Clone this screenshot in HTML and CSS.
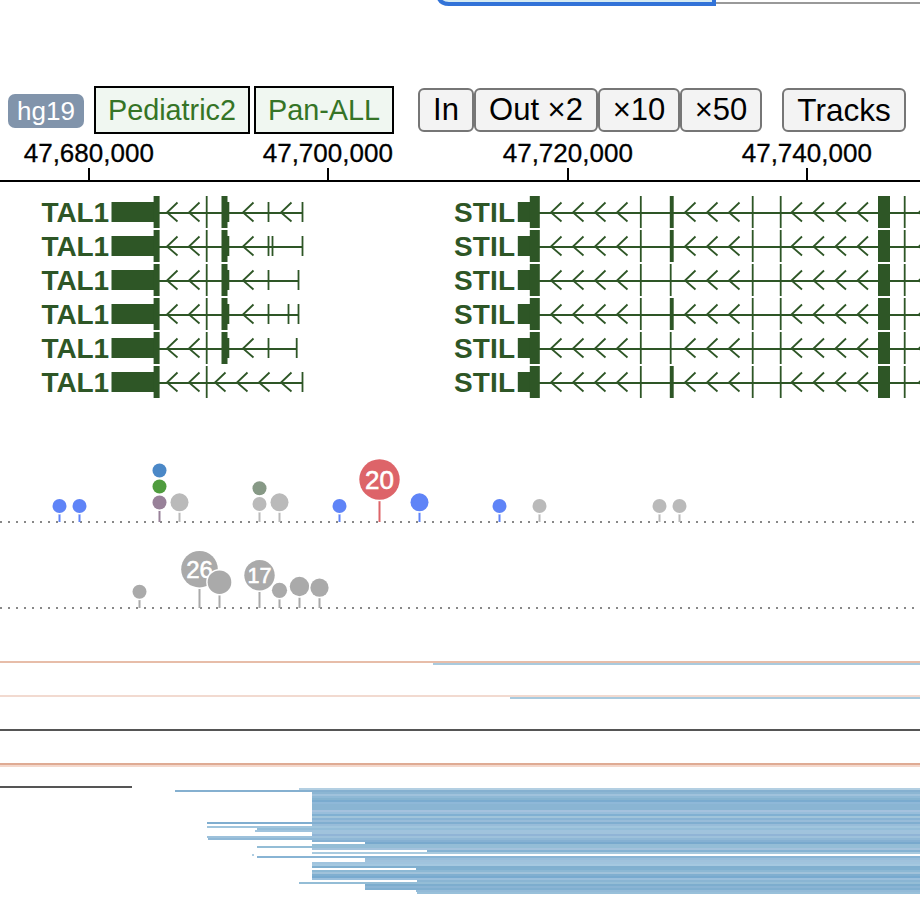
FILE: index.html
```
<!DOCTYPE html>
<html lang="en">
<head>
<meta charset="utf-8">
<title>Genome browser</title>
<link rel="stylesheet" href="styles.css">
</head>
<body>
<main class="browser">
  <svg class="ideogram" viewBox="0 0 920 86">
    <path d="M715 3H920" stroke="#999" stroke-width="2"/>
    <path d="M438 -4Q440 4 449 4H714V-6" fill="#d5eaf2" stroke="#3273d8" stroke-width="4"/>
    <path d="M714 -4V6" stroke="#3273d8" stroke-width="4"/>
  </svg>
  <header class="toolbar">
    <span class="genome">hg19</span>
    <span class="dataset pediatric">Pediatric2</span>
    <span class="dataset pan">Pan-ALL</span>
    <div class="zoom-buttons">
      <button class="in">In</button>
      <button class="out">Out ×2</button>
      <button class="by">×10</button>
      <button class="by">×50</button>
    </div>
    <button class="tracks">Tracks</button>
  </header>
  <svg class="ruler" viewBox="0 134 920 52"></svg>
  <svg class="genes" viewBox="0 186 920 254"></svg>
  <svg class="mutations" viewBox="0 440 920 200"></svg>
  <svg class="segments" viewBox="0 640 920 280"></svg>
</main>
<script src="tracks.js"></script>
</body>
</html>
```
FILE: styles.css
```
* { box-sizing: border-box; }
body {
  margin: 0;
  background: #fff;
  font-family: "Liberation Sans", Arial, sans-serif;
}
.browser {
  width: 920px;
  height: 920px;
  overflow: hidden;
}
svg { display: block; width: 920px; }
.ideogram { height: 86px; }
.toolbar {
  display: flex;
  align-items: center;
  height: 48px;
  padding-left: 8px;
}
.genome {
  width: 76px;
  height: 34px;
  margin: 2px 10px 0 0;
  border-radius: 7px;
  background: #8194ab;
  color: #fff;
  font-size: 26px;
  line-height: 34px;
  text-align: center;
}
.dataset {
  height: 48px;
  margin-right: 4px;
  border: 2px solid #000;
  background: #f0f7f1;
  color: #357426;
  font-size: 28.8px;
  line-height: 44px;
  text-align: center;
}
.pediatric { width: 156px; }
.pan { width: 140px; margin-right: 24px; }
.zoom-buttons { display: flex; margin-right: 20px; }
button {
  height: 44px;
  padding: 0;
  border: 2px solid #767676;
  border-radius: 6px;
  background: #f3f3f3;
  color: #000;
  font-family: inherit;
  font-size: 31px;
  line-height: 38px;
  white-space: nowrap;
}
.in { width: 56px; }
.out { width: 124px; }
.by { width: 82px; }
.tracks { width: 124px; font-size: 31.5px; }
.ruler { height: 52px; }
.ruler text { font-size: 26px; text-anchor: middle; stroke: #000; stroke-width: .3px; }
.genes { height: 254px; }
.genes text { font-size: 28px; font-weight: bold; }
.genes rect, .genes text { fill: #2e5626; }
.genes path { fill: none; stroke: #2e5626; stroke-width: 1.8; }
.mutations { height: 200px; }
.mutations text { fill: #fff; text-anchor: middle; stroke: #fff; stroke-width: .6px; }
.baseline { stroke: #888; stroke-width: 2; stroke-dasharray: 2 6; }
.segments { height: 280px; shape-rendering: crispEdges; }
```
FILE: tracks.js
```
const fill = (name, markup) => {
  document.querySelector("." + name).innerHTML = markup;
};
const rect = (x, y, w, h, color) =>
  `<rect x="${x}" y="${y}" width="${w}" height="${h}"${color ? ` fill="${color}"` : ""}/>`;

// Coordinate ruler
let ruler = rect(0, 180, 920, 2, "#000");
[[88, "47,680,000"], [327, "47,700,000"], [567, "47,720,000"], [806, "47,740,000"]].forEach(([x, label]) => {
  ruler += rect(x, 168, 2, 12, "#000") + `<text x="${x + 0.8}" y="162">${label}</text>`;
});
fill("ruler", ruler);

// Gene transcripts
const tall = (x, w, y) => rect(x, y - 17, w, 32);
const thin = (x, w, y) => rect(x, y - 11, w, 20);
const arrow = (x, y) => `<path d="M${x + 10.5} ${y - 10.5}L${x} ${y - 0.5}L${x + 10.5} ${y + 8.5}"/>`;
const tal = [
  { ticks: [268.5, 302.5], arrows: [167, 189, 243, 281] },
  { ticks: [268.5, 272.5, 302.5], arrows: [167, 189, 243] },
  { ticks: [268.5, 298.5], arrows: [167, 189, 243] },
  { ticks: [268.5, 288.5, 298.5], arrows: [167, 189, 243] },
  { ticks: [268.5, 296.7], arrows: [167, 189, 243] },
  { ticks: [302.5], arrows: [167, 189, 215, 237, 259, 281] }
];
let genes = "";
tal.forEach((t, i) => {
  const y = 213 + i * 34;
  const end = t.ticks[t.ticks.length - 1];
  genes += `<text x="41.5" y="${y + 9}" textLength="67.5">TAL1</text>`;
  genes += rect(158, y - 1, end - 158, 2) + thin(111.5, 43, y) + tall(153.6, 6, y) + tall(205.8, 1.8, y);
  if (i < 5) genes += tall(221.5, 6, y) + thin(227, 2.3, y);
  t.ticks.forEach(x => { genes += thin(x - 0.9, 1.8, y); });
  t.arrows.forEach(x => { genes += arrow(x, y); });

  genes += `<text x="454" y="${y + 9}" textLength="61">STIL</text>`;
  genes += rect(538, y - 1, 382, 2) + thin(517.8, 13, y) + tall(529.8, 10, y) + tall(878, 12, y);
  [640.8, 752.7, 780.7, 904.7].forEach(x => { genes += tall(x - 0.9, 1.8, y); });
  genes += i === 2 || i === 4 ? tall(669.8, 1.8, y) : tall(669.8, 3.9, y);
  [551, 573, 595, 617, 685, 707, 729, 791.5, 813.5, 835.5, 857.5, 919].forEach(x => { genes += arrow(x, y); });
});
fill("genes", genes);

// Mutation lollipops: x, colour, [cy, r] discs from the bottom up, label, label size, label baseline
const blue = "#5f84f7", grey = "#bababa", dark = "#aaa";
const lollipops = (base, list) => {
  let out = `<path class="baseline" d="M0 ${base}H920"/>`;
  list.forEach(([x, color, discs, label, size, ty]) => {
    const bottom = discs[0][0] + discs[0][1] + 1;
    out += rect(x - 1, bottom, 2, base - bottom, color);
    discs.forEach(([cy, r, c]) => {
      out += `<circle cx="${x}" cy="${cy}" r="${r + 1.5}" fill="#fff"/><circle cx="${x}" cy="${cy}" r="${r}" fill="${c || color}"/>`;
    });
    if (label) out += `<text x="${x}" y="${ty}" font-size="${size}">${label}</text>`;
  });
  return out;
};
fill("mutations", lollipops(522, [
  [59.5, blue, [[506, 7]]],
  [79.5, blue, [[506, 7]]],
  [159.5, "#988199", [[502.5, 7], [486.5, 7, "#4f9c3e"], [470.5, 7, "#4b88c7"]]],
  [179.5, grey, [[502.3, 9]]],
  [259.5, grey, [[504, 7], [488.2, 7, "#879986"]]],
  [279.5, grey, [[502.3, 9]]],
  [339.5, blue, [[506, 7]]],
  [379.5, "#dd6469", [[479.5, 20.2]], "20", 26, 489],
  [419.5, blue, [[502.3, 9]]],
  [499.5, blue, [[506, 7]]],
  [539.5, grey, [[506, 7]]],
  [659.5, grey, [[506, 7]]],
  [679.5, grey, [[506, 7]]]
]) + lollipops(608, [
  [139.5, dark, [[591.8, 7]]],
  [199.5, dark, [[569.2, 18.3]], "26", 24, 578],
  [219.5, dark, [[582.2, 11.8]]],
  [259.5, dark, [[575.3, 15.2]], "17", 21.5, 583],
  [279.5, dark, [[590.3, 7.6]]],
  [299.5, dark, [[586.5, 9.7]]],
  [319.5, dark, [[587.7, 9.1]]]
]));

// Copy-number segments, two pixels per sample
let segments = [
  [0, 661, "#e7bda9"], [433, 663, "#a9cade"],
  [0, 695, "#f2dad0"], [510, 697, "#a9cade"],
  [0, 729, "#555"],
  [0, 763, "#dfab94"], [0, 765, "#f4d8cc"]
].map(([x, y, c]) => rect(x, y, 920 - x, 2, c)).join("");
segments += rect(0, 786, 132, 2, "#555") + rect(252, 854, 2, 2, "#b0cee2");
const rows = [
  "299 b3cfe2", "175 85b0d0", "312 8cb6d3", "312 a0c2dc", "312 8fb9d6", "312 85b3d0",
  "312 7aabcf", "312 8fb8d8", "312 8ab5d3", "312 8ab5d3", "312 8ab5d3", "312 a5c2de",
  "312 98bedb", "312 80b0d2", "312 a0c4da", "312 88b3d4", "312 98bcd9", "207 80aed0",
  "312 98bcd9", "207 a0c5dd", "257 94bdd8", "255 a0c3dd", "312 a0c3dc", "312 90b4d6",
  "207 9dc1db", "208 8fb8d6", "312 85b0d2", "365 78a9cd", "312 94bdd6", "257 94bdd6",
  "312 a3c2dc", "427 85b2d2", "312 a8cadf", "", "257 88b4d4", "365 98bedb",
  "365 a0c2dc", "312 a0c4de", "312 a5c8e0", "312 80afcf", "416 80b0d0", "312 8cb8d4",
  "312 a0c2da", "312 80afd0", "312 78aacf", "312 9abfdc", "417 8ab5d3", "299 94bdd6",
  "365 7dadce", "365 8ab4d4", "365 80afd0", "416 94bbd8", "417 98c0da"
];
rows.forEach((row, i) => {
  if (!row) return;
  const [x, color] = row.split(" ");
  segments += rect(x, 788 + i * 2, 920 - x, 2, "#" + color);
});
fill("segments", segments);
```
